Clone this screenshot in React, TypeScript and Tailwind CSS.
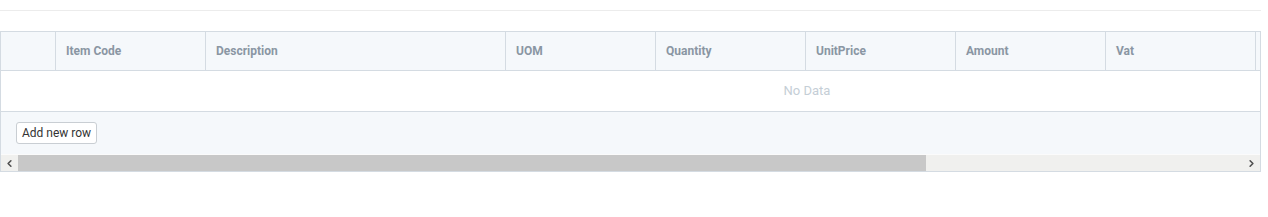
import { ChevronLeft, ChevronRight } from 'lucide-react'

// last column is scrolled out of view; only its left edge shows
const columns = [
  { key: 'sel', label: '', width: 'w-[55px]' },
  { key: 'code', label: 'Item Code', width: 'w-[150px]' },
  { key: 'desc', label: 'Description', width: 'w-[300px]' },
  { key: 'uom', label: 'UOM', width: 'w-[150px]' },
  { key: 'qty', label: 'Quantity', width: 'w-[150px]' },
  { key: 'price', label: 'UnitPrice', width: 'w-[150px]' },
  { key: 'amount', label: 'Amount', width: 'w-[150px]' },
  { key: 'vat', label: 'Vat', width: 'w-[150px]' },
  { key: 'rest', label: '', width: 'w-[150px]' },
]

export default function App() {
  return (
    <div className="h-[217px] w-[1268px] bg-white pt-[10px] font-['Roboto','Liberation_Sans',sans-serif]">
      <div className="w-[1261px] border-t border-[#ececec]" />

      <div className="mt-[20px] w-[1261px] border border-[#d4dbe2]">
        <div className="overflow-hidden">
          <div className="w-[1612px]">
            {/* header */}
            <div className="flex h-[39px] border-b border-[#d4dbe2] bg-[#f5f8fb]">
              {columns.map((c) => (
                <div
                  key={c.key}
                  className={`${c.width} flex shrink-0 items-center border-r border-[#d4dbe2] px-[10px] text-[12px] font-bold text-[#8a96a3]`}
                >
                  {c.label}
                </div>
              ))}
            </div>

            {/* body */}
            <div className="flex h-[41px] items-center justify-center border-b border-[#d4dbe2] bg-white text-[13px] text-[#c5ced6]">
              No Data
            </div>

            {/* footer */}
            <div className="h-[42px] bg-[#f5f8fb] pl-[15px] pt-[10px]">
              <button className="flex h-[22px] w-[81px] items-center justify-center rounded-[3px] border border-[#c9ced3] bg-white text-[12px] text-[#333]">
                Add new row
              </button>
            </div>
          </div>
        </div>

        {/* horizontal scrollbar */}
        <div className="flex h-[17px] border-t border-[#fbfbfb] bg-[#f0f0ee]">
          <div className="flex w-[17px] items-center justify-center text-[#505050]">
            <ChevronLeft className="h-[11px] w-[11px]" strokeWidth={3.5} />
          </div>
          <div className="h-full w-[908px] bg-[#c8c8c8]" />
          <div className="flex-1" />
          <div className="flex w-[17px] items-center justify-center text-[#505050]">
            <ChevronRight className="h-[11px] w-[11px]" strokeWidth={3.5} />
          </div>
        </div>
      </div>
    </div>
  )
}
